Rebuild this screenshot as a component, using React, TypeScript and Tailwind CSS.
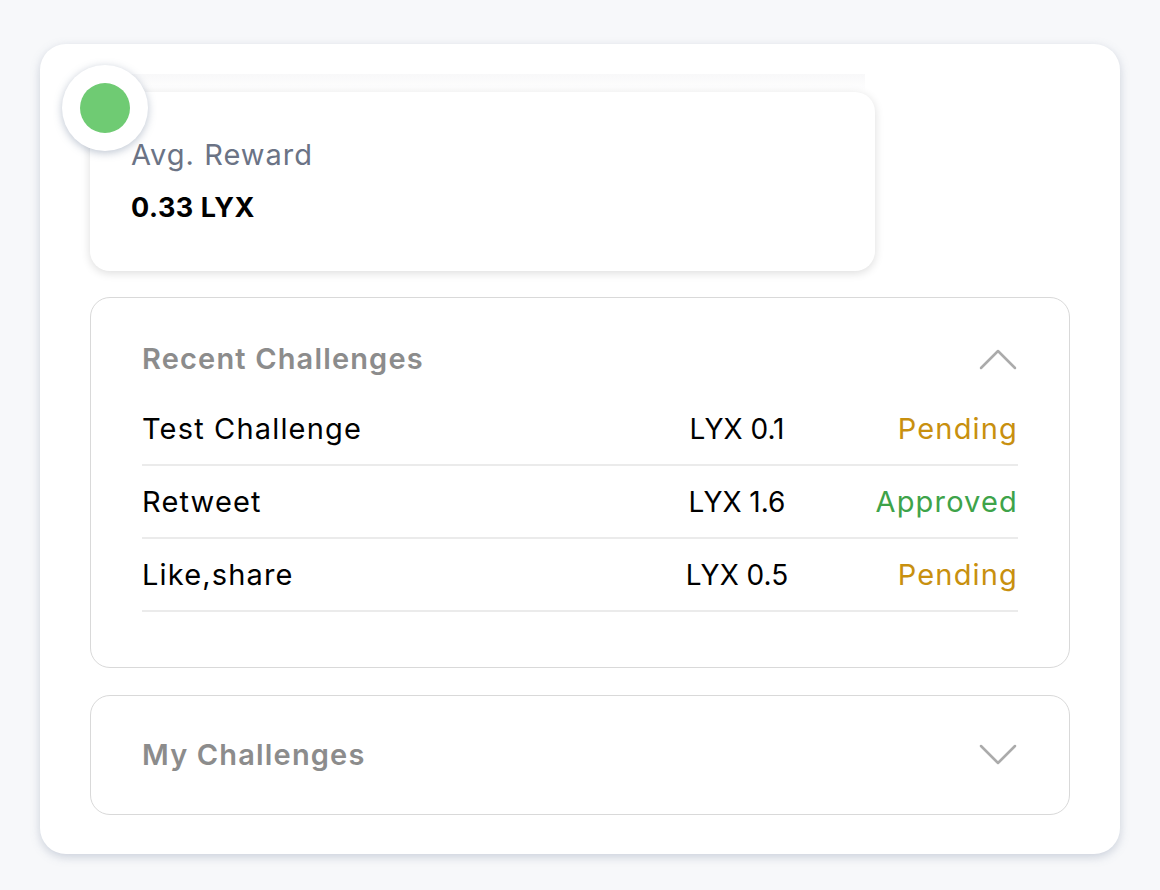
import React from 'react';

const rows = [
  { name: 'Test Challenge', amount: 'LYX 0.1', status: 'Pending' },
  { name: 'Retweet', amount: 'LYX 1.6', status: 'Approved' },
  { name: 'Like,share', amount: 'LYX 0.5', status: 'Pending' },
];

function Chevron({ up }: { up?: boolean }) {
  return (
    <svg width="40" height="24" viewBox="0 0 40 24" fill="none" className="text-[#ababab]">
      <path
        d={up ? 'M3 21 L20 4 L37 21' : 'M3 3 L20 20 L37 3'}
        stroke="currentColor"
        strokeWidth="2.5"
        strokeLinecap="round"
        strokeLinejoin="round"
      />
    </svg>
  );
}

export default function App() {
  return (
    <div className="min-h-screen bg-[#f7f8fa] pl-[40px] pt-[44px] font-['Inter','Noto_Sans',sans-serif]">
      <div className="w-[1080px] bg-white rounded-[26px] shadow-[0_3px_10px_rgba(120,135,160,0.35)] px-[50px] pt-[30px] pb-[39px]">
        {/* stacked card edge behind the stat */}
        <div className="ml-[40px] mr-[205px] h-[18px] bg-gradient-to-b from-[#f8f8f9] to-white" />

        <div className="relative w-[785px] h-[179px] bg-white rounded-[20px] shadow-[0_2px_10px_rgba(0,0,0,0.14)] pl-[41px] pt-[44px]">
          <div className="absolute -left-[28px] -top-[27px] w-[86px] h-[86px] rounded-full bg-white shadow-[0_2px_8px_rgba(90,110,140,0.4)] flex items-center justify-center">
            <div className="w-[50px] h-[50px] rounded-full bg-[#6fcb73]" />
          </div>
          <div className="text-[29px] leading-[38px] tracking-[0.035em] text-[#6b7385]">Avg. Reward</div>
          <div className="mt-[16px] text-[27px] leading-[36px] font-bold tracking-[0.02em] text-black">0.33 LYX</div>
        </div>

        <div className="mt-[26px] border border-[#d9d9d9] rounded-[20px] px-[51px] pt-[41px] pb-[55px]">
          <div className="flex items-center justify-between h-[40px] mb-[14px]">
            <span className="text-[29px] font-semibold tracking-[0.04em] text-[#8c8c8c]">Recent Challenges</span>
            <Chevron up />
          </div>
          {rows.map((r) => (
            <div
              key={r.name}
              className="grid grid-cols-[1fr_190px_186px] items-center h-[73px] border-b-2 border-[#ebebeb] text-[29px] tracking-[0.04em]"
            >
              <span className="text-black">{r.name}</span>
              <span className="text-black text-center text-[28px] tracking-normal">{r.amount}</span>
              <span className={`text-right ${r.status === 'Approved' ? 'text-[#3ea34a]' : 'text-[#c8900f]'}`}>
                {r.status}
              </span>
            </div>
          ))}
        </div>

        <div className="mt-[27px] h-[120px] border border-[#d9d9d9] rounded-[20px] px-[51px] flex items-center justify-between">
          <span className="text-[29px] font-semibold tracking-[0.04em] text-[#8c8c8c]">My Challenges</span>
          <Chevron />
        </div>
      </div>
    </div>
  );
}
